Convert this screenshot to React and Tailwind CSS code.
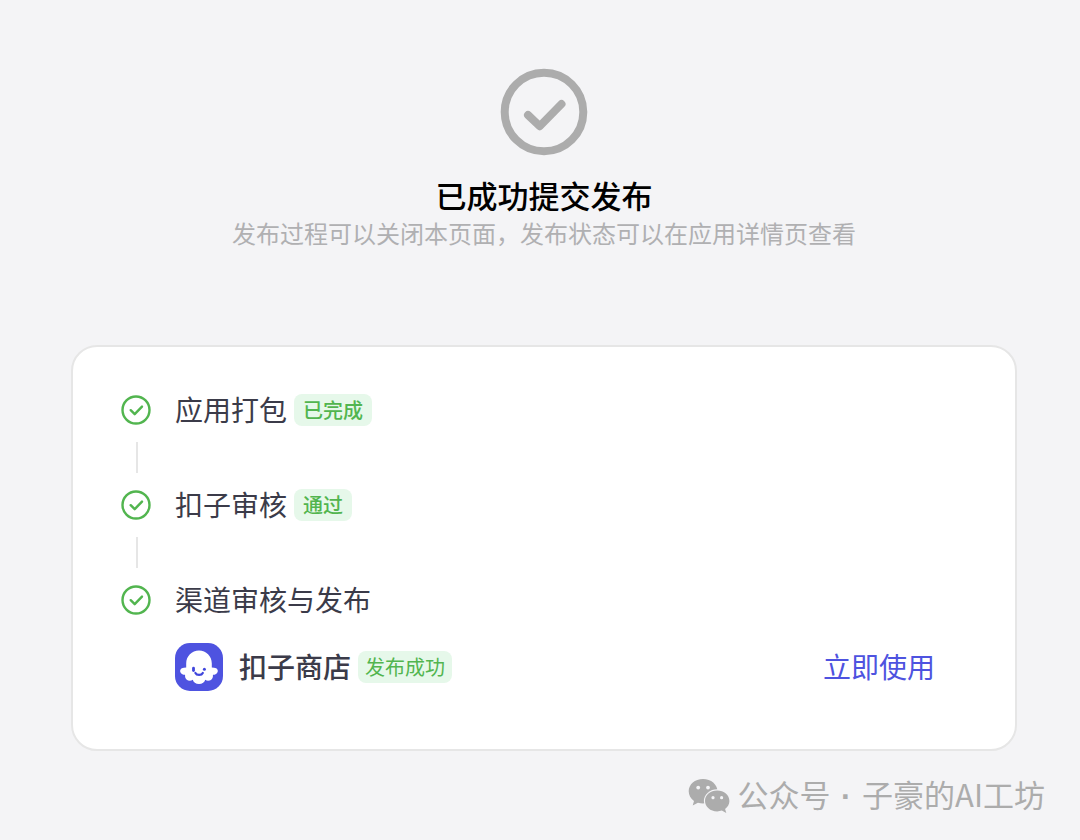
const steps = [
  { id: "package", title: "应用打包", status: "已完成" },
  { id: "review", title: "扣子审核", status: "通过" },
  { id: "channel", title: "渠道审核与发布" },
];

const CheckCircle = () => (
  <svg viewBox="0 0 30 30" className="size-[30px] shrink-0" fill="none" stroke="#52b54f" aria-hidden="true">
    <circle cx="15" cy="15" r="13.5" strokeWidth="2.4" />
    <path d="M9.7 15.2 13.7 19.2 21 11.6" strokeWidth="2.4" strokeLinecap="round" strokeLinejoin="round" />
  </svg>
);

const Tag = ({ children, className }) => (
  <span className={`flex h-8 items-center rounded-lg bg-[#e6f8ea] text-xl leading-8 text-[#52b54f] ${className}`}>
    {children}
  </span>
);

const StoreLogo = () => (
  <svg viewBox="0 0 48 48" className="size-12 shrink-0" aria-hidden="true">
    <rect width="48" height="48" rx="15" fill="#4e53e0" />
    <path
      d="M11.2 20.4C11.2 13.2 16.8 7.5 24 7.5s12.8 5.7 12.8 12.9v4.1c1.6.3 3 .3 4.3.8 2.300 1 2.300 4.400 0 5.600-1.100.6-2.100.8-3.200.9.2 1.900-.2 3.600-1.400 4.700-1.700 1.500-4.500 1.500-6.300.3-.5 2.500-3 4.200-6.200 4.200s-5.700-1.700-6.200-4.200c-1.800 1.200-4.600 1.200-6.300-.3-1.200-1.100-1.600-2.800-1.400-4.700-1.100-.1-2.100-.3-3.200-.9-2.300-1.200-2.300-4.600 0-5.600 1.300-.5 2.700-.5 4.300-.8z"
      fill="#fff"
    />
    <rect x="17.1" y="23.8" width="2.8" height="5.2" rx="1.4" fill="#4046dc" />
    <circle cx="29.4" cy="26.3" r="1.5" fill="#4046dc" />
    <path d="M20.4 30c1.200 2.500 6.200 2.500 7.400 0" fill="none" stroke="#4046dc" strokeWidth="2.2" strokeLinecap="round" />
  </svg>
);

const ChatBubbles = () => (
  <svg viewBox="0 0 42 36" className="h-9 w-[42px] shrink-0" aria-hidden="true">
    <path
      d="M15 1C6.900 1 .700 6.400.700 13.300c0 4 2 7.300 5.300 9.600L4.700 27.500l5.200-2.800c1.700.500 3.400.7 5.100.7 8.100 0 14.500-5.300 14.500-12.100S23.100 1 15 1z"
      fill="#acacac"
    />
    <ellipse cx="29.2" cy="22.9" rx="13.3" ry="11.6" fill="#f4f4f6" />
    <path
      d="M29.200 12.600c-6.900 0-12.200 4.600-12.200 10.400s5.300 10.400 12.200 10.400c1.700 0 3.200-.300 4.600-.800l4.500 2.500-1.200-4.200c2.700-1.900 4.300-4.700 4.300-7.900 0-5.800-5.300-10.400-12.200-10.400z"
      fill="#acacac"
    />
    <circle cx="10.2" cy="9.6" r="1.9" fill="#f4f4f6" />
    <circle cx="20" cy="9.6" r="1.9" fill="#f4f4f6" />
    <circle cx="25" cy="19.7" r="1.6" fill="#f4f4f6" />
    <circle cx="33.6" cy="19.7" r="1.6" fill="#f4f4f6" />
  </svg>
);

const Step = ({ title, status, last }) => (
  <li>
    <div className="flex h-8 items-center">
      <CheckCircle />
      <h2 className="ml-6 pb-0.5 text-[28px] leading-8 text-[#3b3b49]">{title}</h2>
      {status ? <Tag className="ml-[7px] px-[9px] font-medium">{status}</Tag> : null}
    </div>
    {last ? null : <div className="my-4 ml-[15px] h-[31px] w-0.5 bg-[#e6e6e6]" />}
  </li>
);

const App = () => {
  return (
    <div className="flex min-h-screen flex-col bg-[#f4f4f6] pr-[63px] pl-[71px] font-['Noto_Sans_CJK_SC',sans-serif]">
      <header className="flex flex-col items-center pt-[68px] text-center">
        <svg viewBox="0 0 88 88" className="size-[88px]" fill="none" stroke="#acacac" strokeWidth="8" aria-hidden="true">
          <circle cx="44" cy="44" r="39.3" />
          <path d="M28 47 39.7 58.2 61.5 36" strokeLinecap="round" strokeLinejoin="round" />
        </svg>
        <h1 className="mt-[19px] text-[31px] leading-10 font-medium text-black">已成功提交发布</h1>
        <p className="text-2xl leading-9 text-[#b0b0b2]">
          发布过程可以关闭本页面，发布状态可以在应用详情页查看
        </p>
      </header>

      <main className="mt-[94px] rounded-[26px] border-2 border-[#e6e6e6] bg-white px-12 pt-[47px] pb-[58px]">
        <ol>
          {steps.map((step, i) => (
            <Step key={step.id} title={step.title} status={step.status} last={i === steps.length - 1} />
          ))}
        </ol>
        <div className="mt-[27px] flex items-center pr-8 pl-[54px]">
          <StoreLogo />
          <h3 className="ml-4 pb-0.5 text-[28px] leading-8 font-medium text-[#3b3b49]">扣子商店</h3>
          <Tag className="ml-[7px] px-[7px]">发布成功</Tag>
          <a href="#store" className="ml-auto pb-0.5 text-[28px] leading-8 text-[#4e53e0]">
            立即使用
          </a>
        </div>
      </main>

      <footer className="-mr-7 mt-auto flex items-center justify-end gap-2 pb-[23px] text-[31px] leading-10 text-[#acacac]">
        <ChatBubbles />
        <p>
          公众号<span className="mx-0.5 font-['Liberation_Sans',sans-serif] font-bold"> · </span>子豪的AI工坊
        </p>
      </footer>
    </div>
  );
};

export default App;
